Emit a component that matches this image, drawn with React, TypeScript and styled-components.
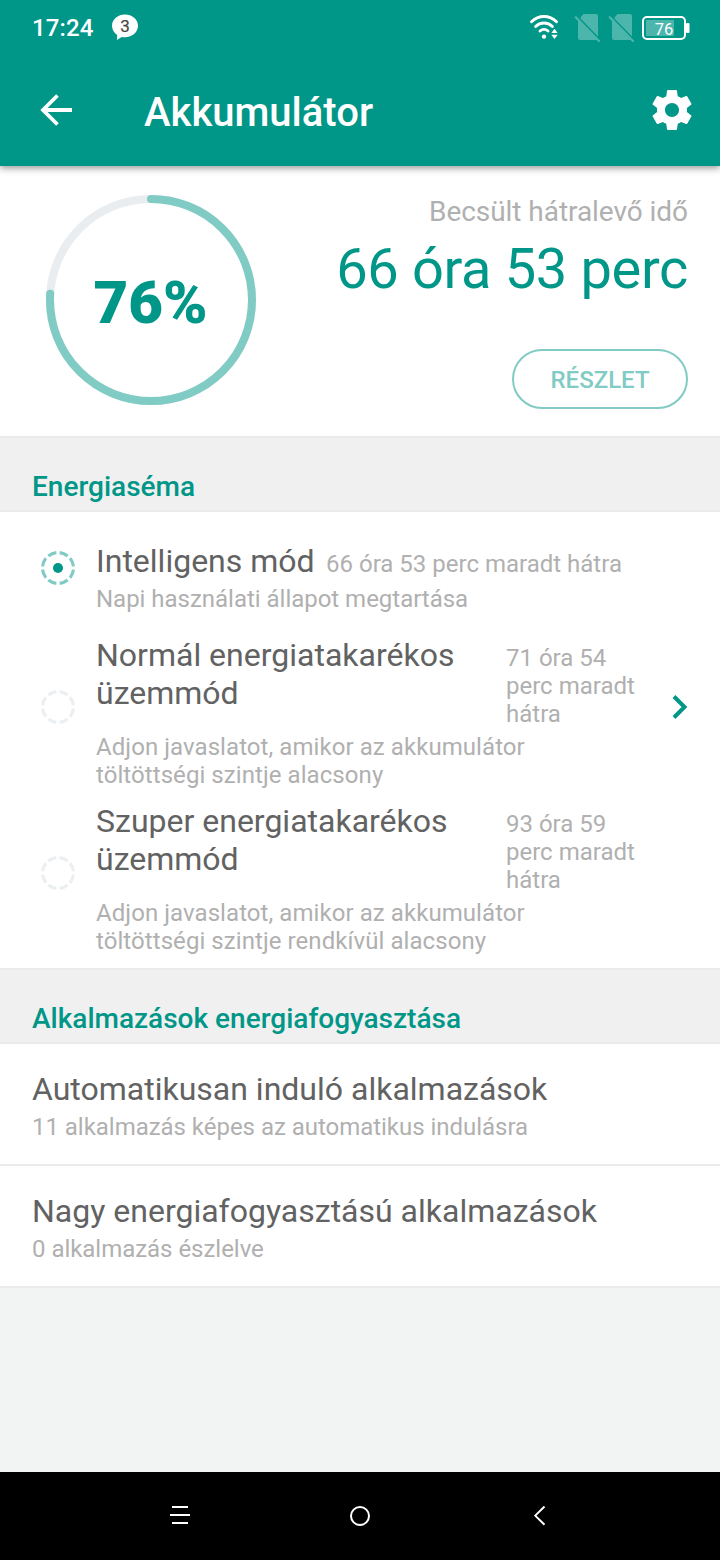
import React from "react";
import styled, { createGlobalStyle } from "styled-components";

const teal = "#009688";
const softTeal = "#80cbc4";
const muted = "#b0b0b0";

const GlobalStyle = createGlobalStyle`
  * { box-sizing: border-box; }
  body { margin: 0; background: #f2f4f3; font-family: Roboto, "Liberation Sans", sans-serif; }
  svg { display: block; flex: none; }
  h1, h2, p { margin: 0; }
`;

const Screen = styled.div`
  display: flex;
  flex-direction: column;
  width: 720px;
  height: 1560px;
  background: #f2f4f3;
  overflow: hidden;
`;

const Header = styled.header`
  position: relative;
  z-index: 1;
  background: ${teal};
  color: #fff;
  box-shadow: 0 2px 7px rgba(0, 0, 0, 0.42);
`;

const StatusBar = styled.div`
  display: flex;
  align-items: center;
  justify-content: space-between;
  height: 56px;
  padding: 0 30px 0 32px;
`;

const StatusGroup = styled.div<{ $gap: number }>`
  display: flex;
  align-items: center;
  gap: ${(p) => p.$gap}px;
`;

const Clock = styled.span`
  font-size: 24px;
  font-weight: 500;
  line-height: 28px;
  letter-spacing: 0.1px;
`;

const AppBar = styled.div`
  display: flex;
  align-items: center;
  height: 110px;
  padding: 0 24px 2px 36px;
`;

const IconButton = styled.button`
  display: flex;
  padding: 0;
  border: 0;
  background: none;
  color: inherit;
`;

const Title = styled.h1`
  flex: 1;
  margin: 6px 0 0 68px;
  font-size: 40px;
  font-weight: 500;
  line-height: 48px;
`;

const Summary = styled.section`
  display: flex;
  justify-content: space-between;
  height: 270px;
  padding: 29px 32px 0 46px;
  background: #fff;
`;

const Gauge = styled.div`
  display: grid;
  width: 210px;
  height: 210px;
  & > * { grid-area: 1 / 1; }
`;

const GaugeValue = styled.span`
  place-self: center;
  margin: 6px 1px 0 0;
  color: ${teal};
  font-size: 60px;
  font-weight: 900;
  line-height: 70px;
`;

const Estimate = styled.div`
  display: flex;
  flex-direction: column;
  align-items: flex-end;
`;

const EstimateLabel = styled.p`
  color: ${muted};
  font-size: 28px;
  line-height: 33px;
  letter-spacing: -0.05px;
`;

const EstimateTime = styled.p`
  margin-top: 8px;
  color: ${teal};
  font-size: 56px;
  line-height: 66px;
  letter-spacing: -0.35px;
`;

const DetailButton = styled.button`
  width: 176px;
  height: 60px;
  margin-top: 47px;
  padding: 2px 0 0;
  border: 2px solid ${softTeal};
  border-radius: 30px;
  background: #fff;
  color: ${softTeal};
  font: 500 24px/28px Roboto, sans-serif;
`;

const SectionTitle = styled.h2`
  height: 76px;
  padding: 32px 32px 0;
  border-top: 2px solid #ebebeb;
  border-bottom: 2px solid #ebebeb;
  background: #f0f0f0;
  color: ${teal};
  font-size: 28px;
  font-weight: 500;
  line-height: 33px;
`;

const ModeList = styled.section`
  display: flex;
  flex-direction: column;
  height: 456px;
  padding: 30px 32px 0 40px;
  background: #fff;
`;

const ModeRow = styled.div<{ $space: number; $lift: number }>`
  display: grid;
  grid-template-columns: 36px 556px 16px;
  column-gap: 20px;
  align-items: center;
  margin-bottom: ${(p) => p.$space}px;
  & > svg { margin-bottom: ${(p) => p.$lift}px; }
`;

const ModeHeading = styled.div`
  display: flex;
  align-items: flex-start;
`;

const ItemName = styled.p<{ $width?: number }>`
  width: ${(p) => (p.$width ? `${p.$width}px` : "auto")};
  color: #626262;
  font-size: 32px;
  line-height: 38px;
`;

const Note = styled.p<{ $width?: number }>`
  max-width: ${(p) => (p.$width ? `${p.$width}px` : "none")};
  color: ${muted};
  font-size: 24px;
  line-height: 28px;
`;

const ModeTime = styled(Note)`
  margin: 8px 0 0 ${(p) => (p.$width ? 10 : 11.5)}px;
`;

const ModeNote = styled(Note)<{ $loose?: boolean }>`
  margin-top: 5px;
  letter-spacing: ${(p) => (p.$loose ? 0.07 : -0.02)}px;
`;

const AppItem = styled.div`
  height: 122px;
  padding: 26px 32px 0;
  border-bottom: 2px solid #ebebeb;
  background: #fff;
`;

const AppNote = styled(Note)`
  margin-top: 5px;
  letter-spacing: -0.03px;
`;

const NavBar = styled.nav`
  display: grid;
  grid-template-columns: repeat(3, 180px);
  place-items: center;
  justify-content: center;
  height: 88px;
  margin-top: auto;
  background: #000;
`;

const MessageBadge = () => (
  <svg width="28" height="28" viewBox="0 0 28 28">
    <path d="M14 0.5C6.800 .500 1 5.400 1 11.800c0 3.800 2 7.100 5.200 9.200L5.900 26l4.800-3c1.100.200 2.200.300 3.300.300 7.200 0 13-5.100 13-11.500S21.200.500 14 .500z" fill="#fff" />
    <text x="14" y="18" textAnchor="middle" fontSize="17" fontFamily="Roboto" fill="#444" stroke="#444" strokeWidth=".2">3</text>
  </svg>
);

const WifiIcon = () => (
  <svg width="32" height="28" viewBox="0 0 32 28" fill="none" stroke="#fff" strokeWidth="2.900" strokeLinecap="round">
    <path d="M3.500 7.800C10.500 .800 21.500 .800 28.500 7.800M7.600 12.500C12.300 7.800 19.700 7.800 24.400 12.500M12 17C14.300 14.900 17.700 14.900 20 17" />
    <circle cx="16" cy="22.600" r="2.200" fill="#fff" stroke="none" />
    <path d="M26.500 14.800l3.200 4.200h-6.400zM26.500 25l3.200-4.200h-6.400z" fill="#fff" stroke="none" />
  </svg>
);

const NoSimIcon = () => (
  <svg width="26" height="28" viewBox="0 0 26 28">
    <path d="M9.500 0H22q2 0 2 2v20.500L6.500 4.500V3.500zM4 6L23.500 26H6q-2 0-2-2z" fill="#4db6ac" />
    <path d="M1.800 3.200L25 27" stroke="#4db6ac" strokeWidth="2.200" strokeLinecap="round" />
  </svg>
);

const BatteryIcon = () => (
  <svg width="48" height="26" viewBox="0 0 48 26">
    <rect x="1" y="2" width="42" height="22" rx="4" fill="none" stroke="#fff" strokeWidth="2" />
    <rect x="4" y="5" width="28" height="16" rx="1" fill="#4db6ac" />
    <rect x="44" y="8" width="3.500" height="10" rx="1" fill="#fff" />
    <text x="22" y="19.500" textAnchor="middle" fontSize="16.500" fontFamily="Roboto" fill="#fff">76</text>
  </svg>
);

const BackArrow = () => (
  <svg width="40" height="40" viewBox="0 0 40 40" fill="none" stroke="#fff" strokeWidth="3.800">
    <path d="M36 20H7M21.500 5.500L7 20L21.500 34.500" />
  </svg>
);

const GearIcon = () => (
  <svg width="48" height="48" viewBox="0 0 24 24" fill="#fff">
    <path d="M19.430 12.980c.040-.320.070-.640.070-.980s-.030-.660-.070-.980l2.110-1.650c.190-.150.240-.420.120-.640l-2-3.460c-.120-.220-.390-.300-.610-.220l-2.490 1c-.520-.400-1.080-.730-1.690-.980l-.380-2.650C14.460 2.180 14.250 2 14 2h-4c-.250 0-.460.180-.490.420l-.380 2.650c-.610.250-1.170.590-1.690.980l-2.490-1c-.230-.090-.490 0-.610.220l-2 3.460c-.130.220-.070.490.120.640l2.110 1.650c-.040.320-.070.650-.070.980s.030.660.070.980l-2.110 1.650c-.190.150-.240.420-.120.640l2 3.460c.120.220.390.300.610.220l2.490-1c.520.400 1.080.730 1.690.980l.380 2.650c.030.240.240.420.490.420h4c.250 0 .460-.180.490-.420l.380-2.650c.610-.250 1.170-.590 1.690-.980l2.490 1c.230.090.490 0 .610-.220l2-3.460c.120-.220.070-.490-.120-.640l-2.110-1.650zM12 15.500c-1.930 0-3.500-1.570-3.500-3.500s1.570-3.500 3.500-3.500 3.500 1.570 3.500 3.500-1.570 3.500-3.500 3.500z" />
  </svg>
);

const Ring = ({ value }: { value: number }) => (
  <svg width="210" height="210" viewBox="0 0 210 210" fill="none" strokeWidth="8">
    <circle cx="105" cy="105" r="101" stroke="#e9edf0" />
    <circle cx="105" cy="105" r="101" stroke={softTeal} strokeLinecap="round" pathLength={100} strokeDasharray={`${value} 100`} transform="rotate(-90 105 105)" />
  </svg>
);

const Radio = ({ checked }: { checked?: boolean }) => (
  <svg width="36" height="36" viewBox="0 0 36 36">
    <circle cx="18" cy="18" r="15.500" fill="none" stroke={checked ? softTeal : "#eceff1"} strokeWidth="3.200" pathLength={80} strokeDasharray="7.200 2.800" strokeDashoffset="-1.400" />
    {checked && <circle cx="18" cy="18" r="5" fill={teal} />}
  </svg>
);

const Chevron = () => (
  <svg width="16" height="26" viewBox="0 0 16 26" fill="none" stroke={teal} strokeWidth="4">
    <path d="M2 2.500L12.500 13L2 23.500" />
  </svg>
);

const modes = [
  { name: "Intelligens mód", time: "66 óra 53 perc maradt hátra", note: "Napi használati állapot megtartása", checked: true, space: 23, lift: 20 },
  { name: "Normál energiatakarékos üzemmód", time: "71 óra 54 perc maradt hátra", note: "Adjon javaslatot, amikor az akkumulátor töltöttségi szintje alacsony", wrap: true, link: true, space: 13, lift: 11 },
  { name: "Szuper energiatakarékos üzemmód", time: "93 óra 59 perc maradt hátra", note: "Adjon javaslatot, amikor az akkumulátor töltöttségi szintje rendkívül alacsony", wrap: true, space: 0, lift: 11 },
];

const apps = [
  { name: "Automatikusan induló alkalmazások", note: "11 alkalmazás képes az automatikus indulásra" },
  { name: "Nagy energiafogyasztású alkalmazások", note: "0 alkalmazás észlelve" },
];

export default function App() {
  return (
    <Screen>
      <GlobalStyle />
      <Header>
        <StatusBar>
          <StatusGroup $gap={18}>
            <Clock>17:24</Clock>
            <MessageBadge />
          </StatusGroup>
          <StatusGroup $gap={14}>
            <WifiIcon />
            <StatusGroup $gap={8}>
              <NoSimIcon />
              <NoSimIcon />
              <BatteryIcon />
            </StatusGroup>
          </StatusGroup>
        </StatusBar>
        <AppBar>
          <IconButton aria-label="Vissza"><BackArrow /></IconButton>
          <Title>Akkumulátor</Title>
          <IconButton aria-label="Beállítások"><GearIcon /></IconButton>
        </AppBar>
      </Header>
      <Summary>
        <Gauge>
          <Ring value={76} />
          <GaugeValue>76%</GaugeValue>
        </Gauge>
        <Estimate>
          <EstimateLabel>Becsült hátralevő idő</EstimateLabel>
          <EstimateTime>66 óra 53 perc</EstimateTime>
          <DetailButton>RÉSZLET</DetailButton>
        </Estimate>
      </Summary>
      <SectionTitle>Energiaséma</SectionTitle>
      <ModeList>
        {modes.map((m) => (
          <ModeRow key={m.name} $space={m.space} $lift={m.lift}>
            <Radio checked={m.checked} />
            <div>
              <ModeHeading>
                <ItemName $width={m.wrap ? 400 : undefined}>{m.name}</ItemName>
                <ModeTime $width={m.wrap ? 132 : undefined}>{m.time}</ModeTime>
              </ModeHeading>
              <ModeNote $width={480} $loose={m.wrap}>{m.note}</ModeNote>
            </div>
            {m.link && <Chevron />}
          </ModeRow>
        ))}
      </ModeList>
      <SectionTitle>Alkalmazások energiafogyasztása</SectionTitle>
      {apps.map((a) => (
        <AppItem key={a.name}>
          <ItemName>{a.name}</ItemName>
          <AppNote>{a.note}</AppNote>
        </AppItem>
      ))}
      <NavBar>
        <svg width="20" height="20" viewBox="0 0 20 20" stroke="#fff" strokeWidth="2">
          <path d="M2 1H18M0 9H20M2 17H18" />
        </svg>
        <svg width="20" height="20" viewBox="0 0 20 20" fill="none" stroke="#fff" strokeWidth="2">
          <circle cx="10" cy="10" r="9" />
        </svg>
        <svg width="12" height="20" viewBox="0 0 12 20" fill="none" stroke="#fff" strokeWidth="2">
          <path d="M10.500 .500L1.200 9.600L10.500 18.700" />
        </svg>
      </NavBar>
    </Screen>
  );
}
